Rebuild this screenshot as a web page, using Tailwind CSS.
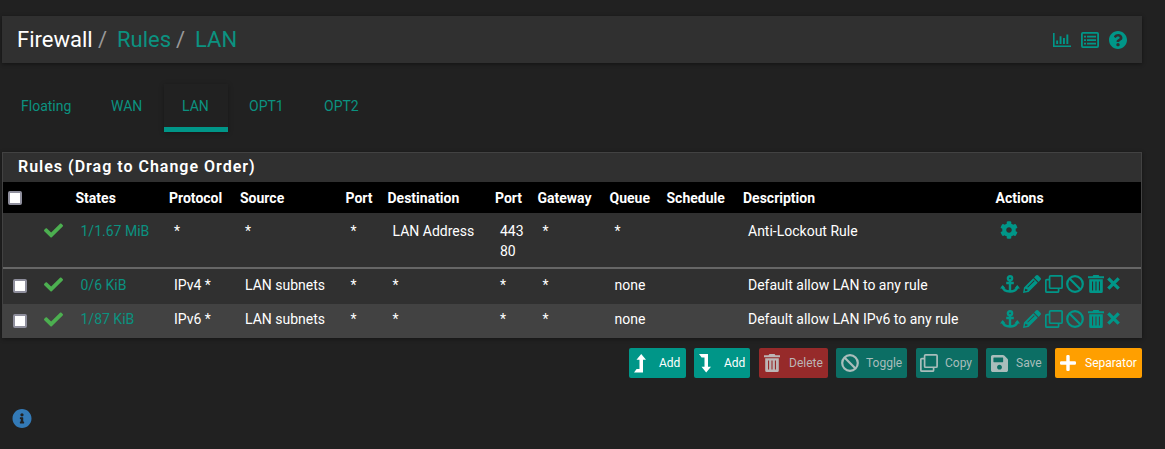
<!DOCTYPE html>
<html lang="en">
<head>
<meta charset="utf-8">
<title>Firewall: Rules: LAN</title>
<script src="https://cdn.jsdelivr.net/npm/@tailwindcss/browser@4"></script>
</head>
<body class="h-[449px] overflow-hidden bg-[#212121] font-['Roboto',sans-serif] text-sm leading-5 text-white">
<svg class="hidden">
  <symbol id="check" viewBox="0 0 512 512"><path d="M173.898 439.404l-166.4-166.4c-9.997-9.997-9.997-26.206 0-36.204l36.203-36.204c9.997-9.998 26.207-9.998 36.204 0L192 312.69 432.095 72.596c9.997-9.997 26.207-9.997 36.204 0l36.203 36.204c9.997 9.997 9.997 26.206 0 36.204l-294.4 294.401c-9.998 9.997-26.207 9.997-36.204-.001z"/></symbol>
  <symbol id="cog" viewBox="0 0 512 512"><path d="M487.4 315.7l-42.6-24.6c4.3-23.2 4.3-47 0-70.2l42.6-24.6c4.9-2.8 7.1-8.6 5.5-14-11.1-35.6-30-67.8-54.7-94.6-3.8-4.1-10-5.1-14.8-2.3L380.8 110c-17.9-15.4-38.5-27.3-60.8-35.1V25.8c0-5.6-3.9-10.5-9.4-11.7-36.7-8.2-74.3-7.8-109.2 0-5.5 1.2-9.4 6.1-9.4 11.7V75c-22.2 7.9-42.8 19.8-60.8 35.1L88.7 85.5c-4.9-2.8-11-1.9-14.8 2.3-24.7 26.7-43.6 58.9-54.7 94.6-1.7 5.4.6 11.2 5.5 14L67.3 221c-4.3 23.2-4.3 47 0 70.2l-42.6 24.6c-4.9 2.8-7.1 8.6-5.5 14 11.1 35.6 30 67.8 54.7 94.6 3.8 4.1 10 5.1 14.8 2.3l42.6-24.6c17.9 15.4 38.5 27.3 60.8 35.1v49.2c0 5.6 3.9 10.5 9.4 11.7 36.7 8.2 74.3 7.8 109.2 0 5.5-1.2 9.4-6.1 9.4-11.7v-49.2c22.2-7.9 42.8-19.8 60.8-35.1l42.6 24.6c4.9 2.8 11 1.9 14.8-2.3 24.7-26.7 43.6-58.9 54.7-94.6 1.5-5.5-.7-11.3-5.6-14.1zM256 336c-44.1 0-80-35.9-80-80s35.9-80 80-80 80 35.9 80 80-35.9 80-80 80z"/></symbol>
  <symbol id="help" viewBox="8 8 496 496"><path d="M504 256c0 136.997-111.043 248-248 248S8 392.997 8 256C8 119.083 119.043 8 256 8s248 111.083 248 248zM262.655 90c-54.497 0-89.255 22.957-116.549 63.758-3.536 5.286-2.353 12.415 2.715 16.258l34.699 26.31c5.205 3.947 12.621 3.008 16.665-2.122 17.864-22.658 30.113-35.797 57.303-35.797 20.429 0 45.698 13.148 45.698 32.958 0 14.976-12.363 22.667-32.534 33.976C247.128 238.528 216 254.941 216 296v4c0 6.627 5.373 12 12 12h56c6.627 0 12-5.373 12-12v-1.333c0-28.462 83.186-29.647 83.186-106.667 0-58.002-60.165-102-116.531-102zM256 338c-25.365 0-46 20.635-46 46 0 25.364 20.635 46 46 46s46-20.636 46-46c0-25.365-20.635-46-46-46z"/></symbol>
  <symbol id="info" viewBox="8 8 496 496"><path d="M256 8C119.043 8 8 119.083 8 256c0 136.997 111.043 248 248 248s248-111.003 248-248C504 119.083 392.957 8 256 8zm0 110c23.196 0 42 18.804 42 42s-18.804 42-42 42-42-18.804-42-42 18.804-42 42-42zm56 254c0 6.627-5.373 12-12 12h-88c-6.627 0-12-5.373-12-12v-24c0-6.627 5.373-12 12-12h12v-64h-12c-6.627 0-12-5.373-12-12v-24c0-6.627 5.373-12 12-12h64c6.627 0 12 5.373 12 12v100h12c6.627 0 12 5.373 12 12v24z"/></symbol>
  <symbol id="save" viewBox="0 32 448 448"><path d="M433.941 129.941l-83.882-83.882A48 48 0 0 0 316.118 32H48C21.49 32 0 53.49 0 80v352c0 26.51 21.49 48 48 48h352c26.51 0 48-21.49 48-48V163.882a48 48 0 0 0-14.059-33.941zM224 416c-35.346 0-64-28.654-64-64 0-35.346 28.654-64 64-64s64 28.654 64 64c0 35.346-28.654 64-64 64zm96-304.52V212c0 6.627-5.373 12-12 12H76c-6.627 0-12-5.373-12-12V108c0-6.627 5.373-12 12-12h228.52c3.183 0 6.235 1.264 8.485 3.515l3.48 3.48A11.996 11.996 0 0 1 320 111.48z"/></symbol>
  <symbol id="anchor" viewBox="0 0 20 18"><g fill="none" stroke="currentColor" stroke-width="2.4"><circle cx="10" cy="3.3" r="2.1"/><path d="M10 5.5V16M6.2 8h7.6M2.4 11.5c.6 3.2 3.6 5 7.6 5s7-1.8 7.6-5"/></g><path d="M0 13.6 2.7 10l2.9 3.6zM14.4 13.6l2.9-3.6 2.7 3.6z"/></symbol>
  <symbol id="pencil" viewBox="0 0 18 18"><path d="M12.9.6a1.7 1.7 0 0 1 2.4 0l2.1 2.1a1.7 1.7 0 0 1 0 2.4l-1.8 1.8-4.5-4.5z"/><path fill-rule="evenodd" d="M10.3 3.2 14.8 7.7 5.5 17 0 18l1-5.5zM11 5.3 4.300 12l.6.6 6.700-6.700zM2.300 13.600 1.800 16.200l2.600-.5v-1.500H3z"/></symbol>
  <symbol id="clone" viewBox="0 0 18 18"><g fill="none" stroke="currentColor" stroke-width="1.7"><rect x="4.6" y=".85" width="12.5" height="12.4" rx="1"/><path d="M4 4.600H1.850a1 1 0 0 0-1 1V16.150a1 1 0 0 0 1 1H12.600a1 1 0 0 0 1-1V14"/></g></symbol>
  <symbol id="ban" viewBox="0 0 18 18"><g fill="none" stroke="currentColor" stroke-width="2.2"><circle cx="9" cy="9" r="7.800"/><path d="M3.500 3.500l11 11"/></g></symbol>
  <symbol id="trash" viewBox="0 0 16 18"><path fill-rule="evenodd" d="M0 1.200h4.600L5.400 0h5.200l.8 1.200H16v2H0zM1.200 4.300h13.600v12.200A1.500 1.500 0 0 1 13.300 18H2.700a1.500 1.500 0 0 1-1.500-1.500zM4 6.500v9h1.100v-9zM7.450 6.500v9h1.100v-9zM10.900 6.500v9H12v-9z"/></symbol>
  <symbol id="times" viewBox="0 0 13 13"><path fill="none" stroke="currentColor" stroke-width="3.300" d="M1.300 1.300l10.400 10.400M11.700 1.300 1.300 11.700"/></symbol>
  <symbol id="up" viewBox="0 0 12 19"><path d="M7.200 0 12 5.800H9V18.500H0L2.600 15h2.900V5.800h-3z"/></symbol>
  <symbol id="down" viewBox="0 0 12 19"><path d="M7.200 18.500 12 12.700H9V0H0l2.600 3.500h2.900v9.200h-3z"/></symbol>
  <symbol id="plus" viewBox="0 0 16 16"><path d="M6.300 1.200q0-1.200 1.200-1.200h1q1.200 0 1.200 1.200v5.100h5.100q1.200 0 1.200 1.200v1q0 1.200-1.200 1.200H9.700v5.100q0 1.200-1.200 1.200h-1q-1.200 0-1.200-1.200V9.700H1.200Q0 9.700 0 8.500v-1q0-1.200 1.200-1.200h5.100z"/></symbol>
  <symbol id="chart" viewBox="0 0 18 14"><path d="M0 0h1.600v12.400H18V14H0zM3.200 7.500h1.900V11H3.200zM6.600 3.200h1.900V11H6.600zM10 5h1.900v6H10zM13.400 1.500h1.900V11h-1.900z"/></symbol>
  <symbol id="list" viewBox="0 0 18 16"><rect x=".9" y=".9" width="16.2" height="14.2" rx="1" fill="none" stroke="currentColor" stroke-width="1.800"/><path d="M3 3.700h2v1.700H3zM6 3.700h9v1.700H6zM3 7.200h2v1.700H3zM6 7.200h9v1.700H6zM3 10.700h2v1.700H3zM6 10.700h9v1.700H6z"/></symbol>
</svg>

<div class="ml-[2px] w-[1140px] pt-4">
  <header class="flex h-[47px] items-center justify-between bg-[#303030] pr-[15px] pl-[15px] shadow-[0_1px_4px_rgba(0,0,0,0.45)]">
    <h1 class="flex text-[22px] leading-[26px]"><span class="w-[81px]">Firewall</span><span class="w-[19px] text-[#999]">/</span><span class="w-[59px] text-[#0b9280]">Rules</span><span class="w-[19px] text-[#999]">/</span><span class="text-[#0b9280]">LAN</span></h1>
    <nav class="flex items-center gap-[10px] fill-current pt-px text-[#009688]">
      <svg class="h-[14px] w-[18px]"><use href="#chart"/></svg>
      <svg class="h-4 w-[18px]"><use href="#list"/></svg>
      <svg class="h-[18px] w-[18px]"><use href="#help"/></svg>
    </nav>
  </header>

  <nav class="mt-[21px] flex h-12 text-[#0b9280]">
    <a class="w-[90px] pt-[12px] pl-[19px]">Floating</a>
    <a class="w-[72px] pt-[12px] pl-[19px]">WAN</a>
    <a class="w-16 border-b-[5px] border-[#009688] pt-[12px] pl-[18px] shadow-[0_1px_5px_rgba(0,0,0,0.3)]">LAN</a>
    <a class="w-[75px] pt-[12px] pl-[21px]">OPT1</a>
    <a class="w-[75px] pt-[12px] pl-[21px]">OPT2</a>
  </nav>

  <section class="mt-5 h-[186px] border border-b-0 border-[#424242] bg-[#303030] shadow-[0_1px_4px_rgba(0,0,0,0.4)]">
    <h2 class="h-[29px] pt-[4px] pl-[15px] text-base leading-5 font-semibold tracking-[1px]">Rules (Drag to Change Order)</h2>
    <div class="grid h-[31px] grid-cols-[35px_32.5px_93.5px_71px_105.5px_42px_107.5px_42.5px_72px_57px_76.5px_252.5px_150px] bg-black pt-[6px] font-bold [&>*]:pl-[5px]">
      <span class="pt-[3px]"><i class="block h-[14px] w-[14px] rounded-[2px] border-2 border-[#8f8f9d] bg-white"></i></span><span></span><span>States</span><span>Protocol</span><span>Source</span><span>Port</span><span>Destination</span><span>Port</span><span>Gateway</span><span>Queue</span><span>Schedule</span><span>Description</span><span>Actions</span>
    </div>
    <div class="grid h-14 grid-cols-[35px_32.5px_93.5px_71px_105.5px_42px_107.5px_42.5px_72px_57px_76.5px_252.5px_150px] border-b-2 border-[#666] pt-[8px] [&>*]:pl-[10px]">
      <span></span><span class="!pl-[6px]"><svg class="h-[19px] w-[19px] fill-[#4caf50]"><use href="#check"/></svg></span><span class="text-[#0b9280]">1/1.67 MiB</span><span>*</span><span>*</span><span>*</span><span>LAN Address</span><span>443<br>80</span><span>*</span><span>*</span><span></span><span>Anti-Lockout Rule</span><span class="!pl-[9px]"><svg class="h-[18px] w-[18px] fill-[#009688]"><use href="#cog"/></svg></span>
    </div>
    <div class="grid h-[35px] grid-cols-[35px_32.5px_93.5px_71px_105.5px_42px_107.5px_42.5px_72px_57px_76.5px_252.5px_150px] pt-[6px] [&>*]:pl-[10px]">
      <span class="pt-[4px]"><i class="block h-[14px] w-[14px] rounded-[2px] border-2 border-[#8f8f9d] bg-white"></i></span><span class="!pl-[6px]"><svg class="h-[19px] w-[19px] fill-[#4caf50]"><use href="#check"/></svg></span><span class="text-[#0b9280]">0/6 KiB</span><span>IPv4 *</span><span>LAN subnets</span><span>*</span><span>*</span><span>*</span><span>*</span><span>none</span><span></span><span>Default allow LAN to any rule</span>
      <span class="flex h-[18px] items-center fill-current !pl-[9.5px] text-[#009688]"><svg class="mr-[3px] h-[18px] w-[20px]"><use href="#anchor"/></svg><svg class="mr-[4px] h-[18px] w-[18px]"><use href="#pencil"/></svg><svg class="mr-[3px] h-[18px] w-[18px]"><use href="#clone"/></svg><svg class="mr-[4px] h-[18px] w-[18px]"><use href="#ban"/></svg><svg class="mr-[3px] h-[18px] w-[16px]"><use href="#trash"/></svg><svg class="-mt-px h-[13px] w-[13px]"><use href="#times"/></svg></span>
    </div>
    <div class="grid h-[34px] grid-cols-[35px_32.5px_93.5px_71px_105.5px_42px_107.5px_42.5px_72px_57px_76.5px_252.5px_150px] bg-[#424242] pt-[5px] [&>*]:pl-[10px]">
      <span class="pt-[5px]"><i class="block h-[14px] w-[14px] rounded-[2px] border-2 border-[#8f8f9d] bg-white"></i></span><span class="!pl-[6px]"><svg class="mt-px h-[19px] w-[19px] fill-[#4caf50]"><use href="#check"/></svg></span><span class="text-[#0b9280]">1/87 KiB</span><span>IPv6 *</span><span>LAN subnets</span><span>*</span><span>*</span><span>*</span><span>*</span><span>none</span><span></span><span>Default allow LAN IPv6 to any rule</span>
      <span class="mt-px flex h-[18px] items-center fill-current !pl-[9.5px] text-[#009688]"><svg class="mr-[3px] h-[18px] w-[20px]"><use href="#anchor"/></svg><svg class="mr-[4px] h-[18px] w-[18px]"><use href="#pencil"/></svg><svg class="mr-[3px] h-[18px] w-[18px]"><use href="#clone"/></svg><svg class="mr-[4px] h-[18px] w-[18px]"><use href="#ban"/></svg><svg class="mr-[3px] h-[18px] w-[16px]"><use href="#trash"/></svg><svg class="-mt-px h-[13px] w-[13px]"><use href="#times"/></svg></span>
    </div>
  </section>

  <div class="mt-[10px] flex h-[30px] justify-end fill-current text-xs [&>button]:flex [&>button]:items-center [&>button]:rounded-[2px]">
    <button class="mr-2 w-[57px] bg-[#009688] pl-[5px]"><svg class="mr-[13px] h-[19px] w-[12px]"><use href="#up"/></svg>Add</button>
    <button class="mr-[9px] w-[56px] bg-[#009688] pl-[5px]"><svg class="mr-[13px] h-[19px] w-[12px]"><use href="#down"/></svg>Add</button>
    <button class="mr-2 w-[69px] bg-[#962a2a] pl-[5px] text-[#bcb6b6]"><svg class="mr-[9px] h-[18px] w-[16px]"><use href="#trash"/></svg>Delete</button>
    <button class="mr-[9px] w-[71px] bg-[#0c6e64] pl-[5px] text-[#a9bdbb]"><svg class="mr-[7px] h-[18px] w-[18px]"><use href="#ban"/></svg>Toggle</button>
    <button class="mr-2 w-[62px] bg-[#0c6e64] pl-[4px] text-[#a9bdbb]"><svg class="mr-[7px] h-[18px] w-[18px]"><use href="#clone"/></svg>Copy</button>
    <button class="mr-2 w-[61px] bg-[#0c6e64] pl-[5px] text-[#a9bdbb]"><svg class="mr-[8px] h-[17px] w-[17px]"><use href="#save"/></svg>Save</button>
    <button class="w-[87px] bg-[#ff9f00] pl-[5px]"><svg class="mr-[9px] h-4 w-4"><use href="#plus"/></svg>Separator</button>
  </div>
  <svg class="mt-[31px] ml-[10px] h-[19px] w-[20px] fill-[#337ab7]"><use href="#info"/></svg>
</div>
</body>
</html>
